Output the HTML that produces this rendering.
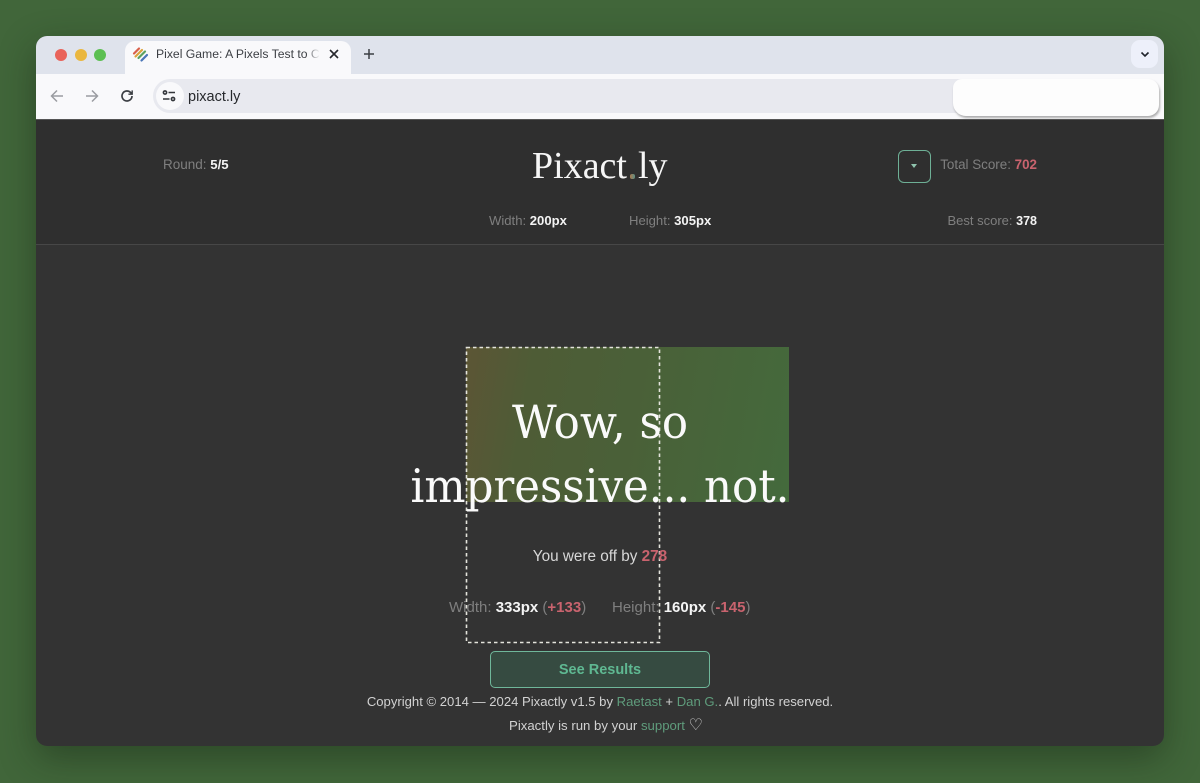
<!DOCTYPE html>
<html><head><meta charset="utf-8"><style>
html,body{margin:0;padding:0}
body{width:1200px;height:783px;overflow:hidden;position:relative;background:#41663a;font-family:"Liberation Sans",sans-serif}
.win{position:absolute;left:36px;top:36px;width:1128px;height:710px;border-radius:11px;overflow:hidden;background:#333333}
.t{position:absolute;white-space:nowrap;line-height:1}
.c{transform:translateX(-50%)}
.r{transform:translateX(-100%)}
.g{color:#7f7f7f}.w{color:#f4f4f4;font-weight:bold}.p{color:#c9636e;font-weight:bold}.l{color:#5f9c7c}
</style></head><body>
<div style="position:absolute;left:36px;top:36px;width:1128px;height:710px;border-radius:11px;box-shadow:0 12px 36px rgba(20,35,18,.45)"></div>
<div class="win">
<div style="position:absolute;left:0;top:83px;width:1128px;height:125px;background:#2f2f2f"></div>
<div style="position:absolute;left:0;top:0;width:1128px;height:38px;background:#dfe3ec"></div>
<div style="position:absolute;left:0;top:38px;width:1128px;height:45px;background:#f9f9fb"></div>
<div style="position:absolute;left:89px;top:5px;width:226px;height:40px;background:#f9f9fb;border-radius:10px 10px 0 0"></div>
<div style="position:absolute;left:117px;top:43px;width:990px;height:34px;background:#e8e9ef;border-radius:17px"></div>
<div style="position:absolute;left:120px;top:46px;width:28px;height:28px;background:#f9f9fb;border-radius:14px"></div>
<div style="position:absolute;left:19px;top:13px;width:12px;height:12px;border-radius:6px;background:#e9635a"></div>
<div style="position:absolute;left:39px;top:13px;width:12px;height:12px;border-radius:6px;background:#eab73f"></div>
<div style="position:absolute;left:58px;top:13px;width:12px;height:12px;border-radius:6px;background:#5cbf52"></div>
<svg style="position:absolute;left:96px;top:10px" width="18" height="18" viewBox="0 0 18 18" fill="none" stroke-width="2.2" stroke-linecap="round"><path d="M2 7.5L7 2.5" stroke="#d9604a"/><path d="M3.5 10.5L10 4" stroke="#dca43c"/><path d="M6.5 12L13 5.5" stroke="#5ca25f"/><path d="M9.5 14.5L15 9" stroke="#4a76b8"/></svg>
<div class="t" style="left:120px;top:12px;font-size:12.2px;color:#3c3f44;width:164px;overflow:hidden">Pixel Game: A Pixels Test to C</div>
<div style="position:absolute;left:270px;top:10px;width:16px;height:18px;background:linear-gradient(90deg,rgba(249,249,251,0),#f9f9fb 85%)"></div>
<svg style="position:absolute;left:292px;top:12px" width="12" height="12" viewBox="0 0 12 12" stroke="#26282c" stroke-width="1.6" fill="none"><path d="M2 2L10 10M10 2L2 10"/></svg>
<svg style="position:absolute;left:327px;top:12px" width="12" height="12" viewBox="0 0 12 12" stroke="#3c3f44" stroke-width="1.5" fill="none"><path d="M6 1V11M1 6H11"/></svg>
<div style="position:absolute;left:1095px;top:4px;width:27px;height:28px;background:#edf0fa;border-radius:9px"></div>
<svg style="position:absolute;left:1103px;top:12px" width="12" height="12" viewBox="0 0 12 12" stroke="#1e222a" stroke-width="1.6" fill="none"><path d="M2.5 4.5L6 8L9.5 4.5"/></svg>
<svg style="position:absolute;left:13px;top:52px" width="16" height="16" viewBox="0 0 16 16" stroke="#9a9ca1" stroke-width="1.5" fill="none"><path d="M14 8H2.5M8 2.5L2.5 8L8 13.5"/></svg>
<svg style="position:absolute;left:48px;top:52px" width="16" height="16" viewBox="0 0 16 16" stroke="#9a9ca1" stroke-width="1.5" fill="none"><path d="M2 8H13.5M8 2.5L13.5 8L8 13.5"/></svg>
<svg style="position:absolute;left:83px;top:52px" width="16" height="16" viewBox="0 0 16 16" stroke="#3c3f44" stroke-width="1.7" fill="none"><path d="M13 8A5 5 0 1 1 11.5 4.4L13 6"/><path d="M13.2 2.4V6.2H9.4" stroke-width="1.4"/></svg>
<svg style="position:absolute;left:125px;top:52px" width="16" height="16" viewBox="0 0 16 16" stroke="#33363b" stroke-width="1.6" fill="none"><circle cx="4" cy="4.5" r="1.6"/><path d="M7.5 4.5H14M2 11H8.5"/><circle cx="12" cy="11" r="1.6"/></svg>
<div class="t" style="left:152px;top:54px;font-size:14.5px;color:#26282c">pixact.ly</div>
<div style="position:absolute;left:917px;top:43px;width:206px;height:37px;background:#fdfdfd;border-radius:9px 11px 11px 13px;box-shadow:1px 2px 2px rgba(120,120,120,.6)"></div>
<div style="position:absolute;left:0;top:83px;width:1128px;height:1px;background:#555"></div>

<div style="position:absolute;left:0;top:208px;width:1128px;height:1px;background:#474747"></div>
<div class="t g" style="left:127px;top:122px;font-size:13.5px">Round: <span class="w" style="font-size:13.2px">5/5</span></div>
<div class="t" style="left:496px;top:111px;font-size:38px;color:#f6f6f6;font-family:'Liberation Serif',serif">Pixact</div>
<div class="t" style="left:602px;top:111px;font-size:38px;color:#f6f6f6;font-family:'Liberation Serif',serif">ly</div>
<div style="position:absolute;left:594px;top:138px;width:5px;height:5px;border-radius:2px;background:linear-gradient(90deg,#a8794f,#5c8f86)"></div>
<div style="position:absolute;left:862px;top:114px;width:31px;height:31px;border:1px solid #6eb096;border-radius:6px"></div>
<div style="position:absolute;left:875px;top:128px;border-left:3px solid transparent;border-right:3px solid transparent;border-top:4px solid #8fc4ae"></div>
<div class="t g r" style="left:1001px;top:122px;font-size:13.4px">Total Score: <span class="p">702</span></div>
<div class="t g" style="left:453px;top:178px;font-size:13.1px">Width: <span class="w">200px</span></div>
<div class="t g" style="left:593px;top:178px;font-size:13.1px">Height: <span class="w">305px</span></div>
<div class="t g r" style="left:1001px;top:178px;font-size:13px">Best score: <span class="w" style="font-size:12.5px">378</span></div>

<div style="position:absolute;left:430px;top:311px;width:323px;height:155px;background:linear-gradient(100deg,#5c5535 0%,#4e5c36 20%,#4a6038 50%,#446a3c 100%)"></div>
<svg style="position:absolute;left:429px;top:310px" width="196" height="298" fill="none" stroke="#e4e4dc" stroke-width="1.6" stroke-dasharray="3.5 3"><rect x="1.5" y="1.5" width="193" height="295"/></svg>
<div class="t" style="left:564px;top:354px;width:0;font-size:46px;line-height:64px;color:#fafafa;text-align:center;font-family:'DejaVu Serif',serif"><div style="position:absolute;left:-300px;width:600px;transform:scaleX(.945)">Wow, so<br>impressive... not.</div></div>
<div class="t c" style="left:564px;top:513px;font-size:15.3px;color:#d8d8d8">You were off by <span class="p">278</span></div>
<div class="t g" style="left:413px;top:564px;font-size:15px">Width: <span class="w">333px</span> (<span class="p">+133</span>)</div>
<div class="t g" style="left:576px;top:564px;font-size:15px">Height: <span class="w">160px</span> (<span class="p">-145</span>)</div>
<div style="position:absolute;left:454px;top:615px;width:218px;height:35px;background:#364b41;border:1px solid #6fb79a;border-radius:5px"></div>
<div class="t c" style="left:564px;top:627px;font-size:14.5px;font-weight:bold;color:#5fb892">See Results</div>
<div class="t c" style="left:564px;top:659px;font-size:13.1px;color:#d2d2d2">Copyright © 2014 — 2024 Pixactly v1.5 by <span class="l">Raetast</span> + <span class="l">Dan G.</span>. All rights reserved.</div>
<div class="t c" style="left:570px;top:682px;font-size:13.2px;color:#d2d2d2">Pixactly is run by your <span class="l">support</span> <span style="font-size:16px">♡</span></div>
</div>
</body></html>
